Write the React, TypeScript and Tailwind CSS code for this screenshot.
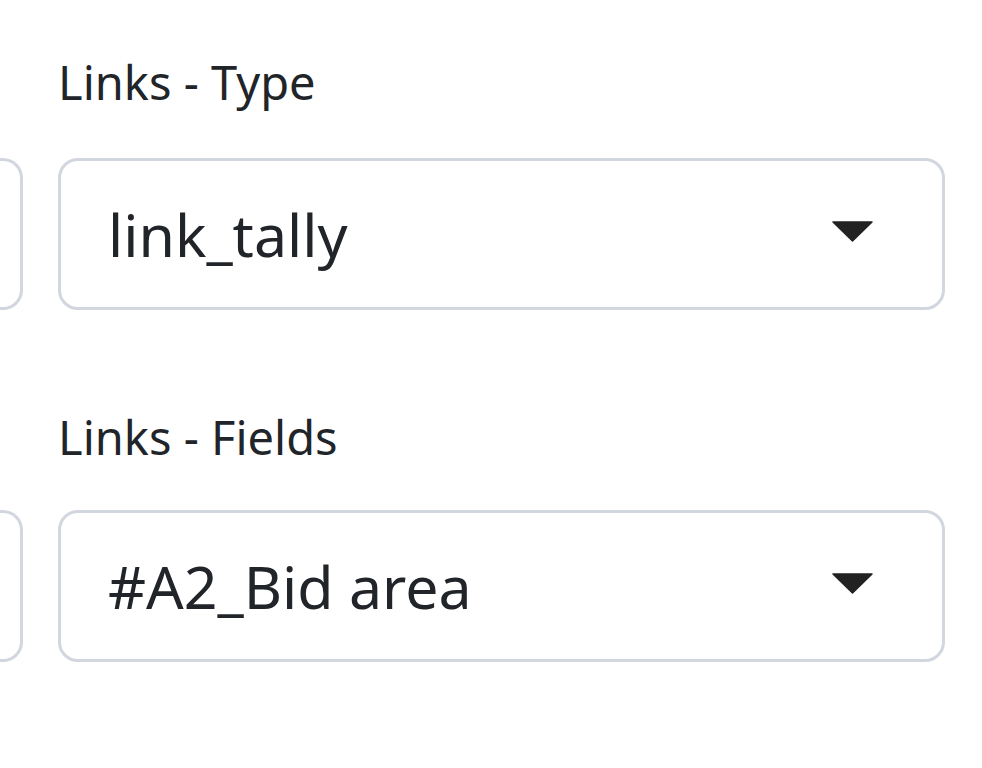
import React from "react";

function Caret() {
  return (
    <svg width="41" height="21" viewBox="0 0 41 21" className="shrink-0 mb-[5px]">
      <path d="M1 1 L40 1 L20.5 20 Z" fill="#222222" stroke="#222222" strokeWidth="1.5" strokeLinejoin="round" />
    </svg>
  );
}

function SelectBox({ value }: { value: string }) {
  return (
    <div className="h-[152px] w-[887px] rounded-[20px] border-[3px] border-[#d2d7df] bg-white flex items-center pl-[47px] pr-[69px] justify-between">
      <span className="text-[59px] text-[#212529] leading-normal">{value}</span>
      <Caret />
    </div>
  );
}

function PartialBox() {
  return <div className="h-[152px] w-[23px] rounded-r-[20px] border-[3px] border-l-0 border-[#d2d7df] bg-white" />;
}

export default function App() {
  return (
    <div
      className="w-[982px] h-[768px] bg-white overflow-hidden flex gap-[35px]"
      style={{ fontFamily: '"Noto Sans", "Open Sans", sans-serif' }}
    >
      <div className="flex flex-col w-[23px] shrink-0">
        <div className="h-[158px]" />
        <PartialBox />
        <div className="h-[200px]" />
        <PartialBox />
      </div>
      <div className="flex flex-col w-[887px] shrink-0">
        <div className="mt-[50px] text-[47px] leading-[64px] text-[#212529]">Links - Type</div>
        <div className="mt-[44px]">
          <SelectBox value="link_tally" />
        </div>
        <div className="mt-[95px] text-[47px] leading-[64px] text-[#212529]">Links - Fields</div>
        <div className="mt-[41px]">
          <SelectBox value="#A2_Bid area" />
        </div>
      </div>
    </div>
  );
}
